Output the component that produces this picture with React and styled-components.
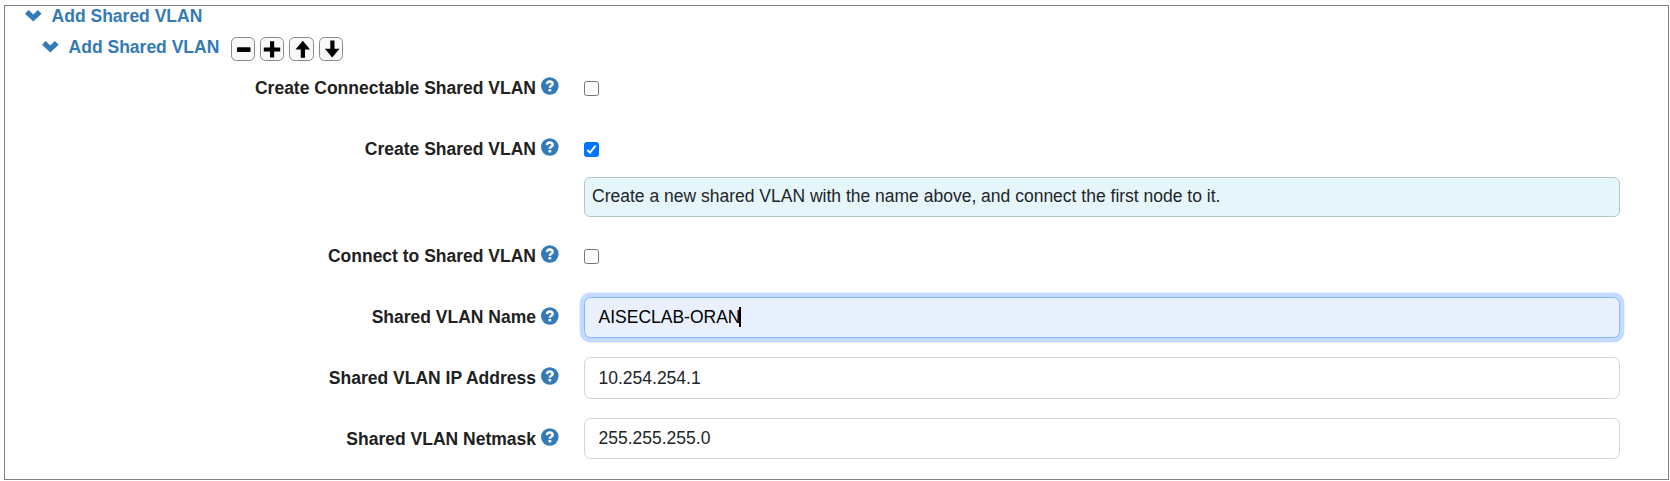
import React from "react";
import styled, { createGlobalStyle } from "styled-components";

const GlobalStyle = createGlobalStyle`
  *, *::before, *::after { box-sizing: border-box; }
  body {
    margin: 0;
    background: #fff;
    color: #212529;
    font-family: "Liberation Sans", Arial, sans-serif;
    font-size: 17.5px;
    line-height: 26px;
  }
`;

const Panel = styled.section`
  width: 1665px;
  height: 475px;
  margin: 5px 0 0 4px;
  border: 1px solid #808080;
  overflow: hidden;
`;

const Heading = styled.div`
  display: flex;
  align-items: center;
  height: ${(p) => p.$height}px;
  margin-bottom: ${(p) => p.$gap || 0}px;
  padding-left: ${(p) => p.$indent}px;
  color: #337ab7;
  font-weight: bold;
  white-space: nowrap;
`;

const HeadingText = styled.span`
  width: 150px;
  margin: 0 12.4px 0 9.6px;
`;

const Tools = styled.div`
  display: flex;
  gap: 5px;
  padding-top: 4px;
`;

const ToolButton = styled.button`
  display: flex;
  align-items: center;
  justify-content: flex-start;
  width: 24px;
  height: 24px;
  padding: 0;
  border: 1px solid #8a8a8a;
  border-radius: 5.5px;
  background: #f8f9fa;
  color: #000;

  &:nth-child(3) { width: 25px; }
  svg { flex: none; }
`;

const Row = styled.div`
  display: flex;
  align-items: flex-start;
  height: ${(p) => p.$height}px;
`;

const Label = styled.label`
  display: flex;
  justify-content: flex-end;
  gap: 5px;
  width: 554px;
  margin-right: 25px;
  color: #212121;
  font-weight: bold;
  white-space: nowrap;
  padding-top: ${(p) => p.$top}px;
`;

const HelpIcon = styled.svg`
  width: 18px;
  height: 18px;
  margin-top: ${(p) => p.$drop}px;
  flex: none;
`;

const Check = styled.span`
  display: block;
  width: 15px;
  height: 15px;
  margin-top: ${(p) => p.$top}px;
  border: 1px solid ${(p) => (p.$on ? "#0075ff" : "#767676")};
  border-radius: 2.5px;
  background: ${(p) => (p.$on ? "#0075ff" : "#fff")};
  svg { display: block; width: 13px; height: 13px; }
`;

const Field = styled.div`
  display: flex;
  flex-direction: column;
`;

const Note = styled.div`
  width: 1036px;
  height: 40px;
  margin-top: 20px;
  padding: 5px 7px;
  border: 1px solid #b5c7cc;
  border-radius: 6px;
  background: #e6f5fa;
  color: #212529;
`;

const Input = styled.div`
  display: flex;
  align-items: flex-start;
  width: 1036px;
  height: ${(p) => p.$height}px;
  padding: ${(p) => p.$top}px 13.5px 0;
  border: 1px solid ${(p) => (p.$focus ? "#86b7fe" : "#ced4da")};
  border-radius: 6.5px;
  background: ${(p) => (p.$focus ? "#e8f0fe" : "#fff")};
  box-shadow: ${(p) => (p.$focus ? "0 0 0 4.4px #c2dbfe" : "none")};
  color: ${(p) => (p.$focus ? "#000" : "#212529")};
`;

const Caret = styled.i`
  width: 2px;
  height: 20px;
  margin: 3px 0 0 -1px;
  background: #000;
`;

const Chevron = () => (
  <svg width="17" height="12" viewBox="0 0 17 12">
    <path fill="currentColor" d="M0 3.8 3.7.1l4.6 4.4L12.9.1l3.7 3.7-8.3 7.7z" />
  </svg>
);

const shapes = {
  Remove: "M5 9.9q0-.7.7-.7h12.1q.7 0 .7.7v3.4q0 .7-.7.7H5.7q-.7 0-.7-.7z",
  Add: "M9 3.2h4.2v6.2h6v4.2h-6v6H9v-6H2.8V9.4H9z",
  "Move up": "M12.8 2.7l7.3 8.7H15v8.3h-4.2v-8.3H5.5z",
  "Move down": "M12.2 19.4l7.3-8.7h-5V2.4h-4.2v8.3H4.9z",
};

const Help = ({ drop }) => (
  <HelpIcon $drop={drop} viewBox="0 0 18 18">
    <circle cx="8.8" cy="9" r="8.8" fill="#337ab7" />
    <path d="M6 7.1C6.1 3.7 11.6 3.7 11.6 6.9c0 2-2.8 1.8-2.8 3.9" fill="none" stroke="#fff" strokeWidth="2.5" />
    <path d="M7.5 12h2.7v2.4H7.5z" fill="#fff" />
  </HelpIcon>
);

const FieldLabel = ({ top, drop = 2, children }) => (
  <Label $top={top}>
    <span>{children}</span>
    <Help drop={drop} />
  </Label>
);

export default function App() {
  return (
    <>
      <GlobalStyle />
      <Panel>
        <Heading $height={20} $indent={20}>
          <Chevron />
          <HeadingText>Add Shared VLAN</HeadingText>
        </Heading>
        <Heading $height={41} $gap={2} $indent={37}>
          <Chevron />
          <HeadingText>Add Shared VLAN</HeadingText>
          <Tools>
            {Object.entries(shapes).map(([name, d]) => (
              <ToolButton key={name} aria-label={name}>
                <svg width="22" height="22" viewBox="0 0 22 22">
                  <path fill="currentColor" d={d} />
                </svg>
              </ToolButton>
            ))}
          </Tools>
        </Heading>
        <Row $height={61}>
          <FieldLabel top={6}>Create Connectable Shared VLAN</FieldLabel>
          <Check $top={12} />
        </Row>
        <Row $height={107}>
          <FieldLabel top={6}>Create Shared VLAN</FieldLabel>
          <Field>
            <Check $top={12} $on>
              <svg viewBox="0 0 13 13">
                <path d="M2.4 7 5 9.6l5.6-7" fill="none" stroke="#fff" strokeWidth="2" />
              </svg>
            </Check>
            <Note>Create a new shared VLAN with the name above, and connect the first node to it.</Note>
          </Field>
        </Row>
        <Row $height={60}>
          <FieldLabel top={6}>Connect to Shared VLAN</FieldLabel>
          <Check $top={12} />
        </Row>
        <Row $height={60}>
          <FieldLabel top={7} drop={3}>Shared VLAN Name</FieldLabel>
          <Input $height={41} $top={6} $focus>
            AISECLAB-ORAN
            <Caret />
          </Input>
        </Row>
        <Row $height={61}>
          <FieldLabel top={8}>Shared VLAN IP Address</FieldLabel>
          <Input $height={42} $top={7}>10.254.254.1</Input>
        </Row>
        <Row $height={42}>
          <FieldLabel top={8}>Shared VLAN Netmask</FieldLabel>
          <Input $height={41} $top={6}>255.255.255.0</Input>
        </Row>
      </Panel>
    </>
  );
}
